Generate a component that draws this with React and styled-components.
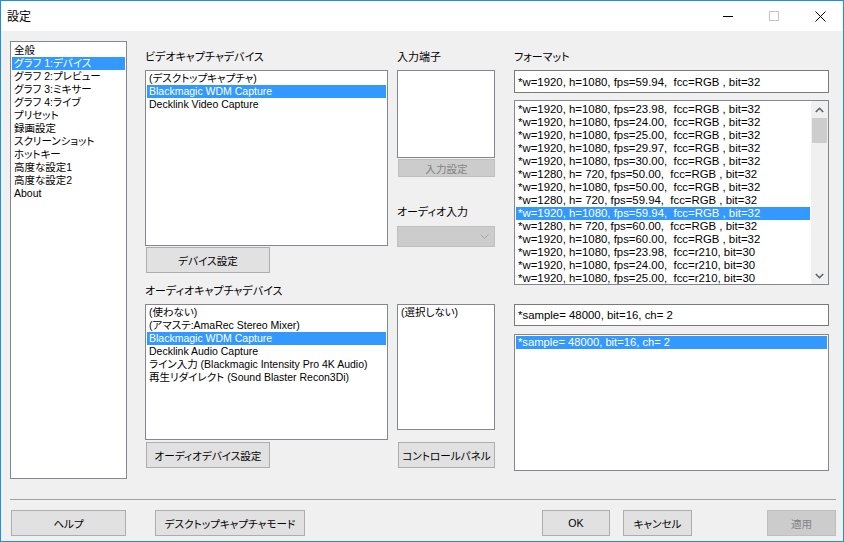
import React from 'react';
import styled, { createGlobalStyle } from 'styled-components';

const GlobalStyle = createGlobalStyle`
  html, body {
    margin: 0;
    padding: 0;
    background: #fff;
  }
  body {
    font-family: "Liberation Sans", "Noto Sans CJK JP", sans-serif;
    font-size: 10.5px;
    font-feature-settings: "palt";
    color: #000;
  }
`;

const navItems = [
  '全般',
  'グラフ 1:デバイス',
  'グラフ 2:プレビュー',
  'グラフ 3:ミキサー',
  'グラフ 4:ライブ',
  'プリセット',
  '録画設定',
  'スクリーンショット',
  'ホットキー',
  '高度な設定1',
  '高度な設定2',
  'About',
];

const videoDevices = ['(デスクトップキャプチャ)', 'Blackmagic WDM Capture', 'Decklink Video Capture'];

const audioDevices = [
  '(使わない)',
  '(アマステ:AmaRec Stereo Mixer)',
  'Blackmagic WDM Capture',
  'Decklink Audio Capture',
  'ライン入力 (Blackmagic Intensity Pro 4K Audio)',
  '再生リダイレクト (Sound Blaster Recon3Di)',
];

const formats = [
  '*w=1920, h=1080, fps=23.98,  fcc=RGB , bit=32',
  '*w=1920, h=1080, fps=24.00,  fcc=RGB , bit=32',
  '*w=1920, h=1080, fps=25.00,  fcc=RGB , bit=32',
  '*w=1920, h=1080, fps=29.97,  fcc=RGB , bit=32',
  '*w=1920, h=1080, fps=30.00,  fcc=RGB , bit=32',
  '*w=1280, h= 720, fps=50.00,  fcc=RGB , bit=32',
  '*w=1920, h=1080, fps=50.00,  fcc=RGB , bit=32',
  '*w=1280, h= 720, fps=59.94,  fcc=RGB , bit=32',
  '*w=1920, h=1080, fps=59.94,  fcc=RGB , bit=32',
  '*w=1280, h= 720, fps=60.00,  fcc=RGB , bit=32',
  '*w=1920, h=1080, fps=60.00,  fcc=RGB , bit=32',
  '*w=1920, h=1080, fps=23.98,  fcc=r210, bit=30',
  '*w=1920, h=1080, fps=24.00,  fcc=r210, bit=30',
  '*w=1920, h=1080, fps=25.00,  fcc=r210, bit=30',
];

const audioFormat = '*sample= 48000, bit=16, ch= 2';

const App = () => {
  return (
    <>
      <GlobalStyle />
      <Window>
        <TitleBar>
          <Title>設定</Title>
          <CaptionButton>
            <svg width="10" height="10" viewBox="0 0 10 10">
              <line x1="0" y1="5.5" x2="10" y2="5.5" stroke="#000" strokeWidth="1" />
            </svg>
          </CaptionButton>
          <CaptionButton>
            <svg width="10" height="10" viewBox="0 0 10 10">
              <rect x="0.5" y="0.5" width="9" height="9" fill="none" stroke="#c4c4c4" strokeWidth="1" />
            </svg>
          </CaptionButton>
          <CaptionButton>
            <svg width="11" height="11" viewBox="0 0 11 11">
              <path d="M0.5 0.5 L10.5 10.5 M10.5 0.5 L0.5 10.5" stroke="#000" strokeWidth="1" />
            </svg>
          </CaptionButton>
        </TitleBar>

        <Main>
          <ListBox $w={117} $h={438} $pad={2}>
            {navItems.map((t, i) => (
              <Row key={t} $selected={i === 1}>{t}</Row>
            ))}
          </ListBox>

          <Column $w={243} $ml={18}>
            <Label $mt={10} $mb={6}>ビデオキャプチャデバイス</Label>
            <ListBox $w={243} $h={176} $pad={1}>
              {videoDevices.map((t, i) => (
                <Row key={t} $selected={i === 1}>{t}</Row>
              ))}
            </ListBox>
            <Button $w={124} $mt={1}>デバイス設定</Button>
            <Label $mt={12} $mb={6}>オーディオキャプチャデバイス</Label>
            <ListBox $w={243} $h={136} $pad={1}>
              {audioDevices.map((t, i) => (
                <Row key={t} $selected={i === 2}>{t}</Row>
              ))}
            </ListBox>
            <Button $w={124} $mt={2}>オーディオデバイス設定</Button>
          </Column>

          <Column $w={98} $ml={9}>
            <Label $mt={10} $mb={6}>入力端子</Label>
            <ListBox $w={98} $h={88} $pad={1} />
            <Button $w={97} $h={18} $mt={1} disabled>入力設定</Button>
            <Label $mt={29} $mb={7}>オーディオ入力</Label>
            <Combo>
              <svg width="9" height="5" viewBox="0 0 9 5">
                <path d="M0.5 0.5 L4.5 4.5 L8.5 0.5" fill="none" stroke="#a6a6a6" strokeWidth="1" />
              </svg>
            </Combo>
            <ListBox $w={98} $h={126} $pad={1} $mt={57}>
              <Row>(選択しない)</Row>
            </ListBox>
            <Button $w={97} $mt={12}>コントロールパネル</Button>
          </Column>

          <Column $w={315} $ml={19}>
            <Label $mt={10} $mb={6}>フォーマット</Label>
            <TextBox $h={23}>{formats[8]}</TextBox>
            <ListBox $w={315} $h={185} $pad={0} $mt={7} $row>
              <Items $pad={2}>
                {formats.map((t, i) => (
                  <Row key={i} $selected={i === 8} $size={11.4}>{t}</Row>
                ))}
              </Items>
              <ScrollBar>
                <ScrollArrow>
                  <svg width="9" height="6" viewBox="0 0 9 6">
                    <path d="M0.8 5 L4.5 1.3 L8.2 5" fill="none" stroke="#606060" strokeWidth="1.6" />
                  </svg>
                </ScrollArrow>
                <Thumb />
                <Track />
                <ScrollArrow>
                  <svg width="9" height="6" viewBox="0 0 9 6">
                    <path d="M0.8 1 L4.5 4.7 L8.2 1" fill="none" stroke="#606060" strokeWidth="1.6" />
                  </svg>
                </ScrollArrow>
              </ScrollBar>
            </ListBox>
            <TextBox $h={22} $mt={19}>{audioFormat}</TextBox>
            <ListBox $w={315} $h={137} $pad={1} $mt={8}>
              <Row $selected $size={11.2}>{audioFormat}</Row>
            </ListBox>
          </Column>
        </Main>

        <Separator />
        <ButtonRow>
          <Button $w={115}>ヘルプ</Button>
          <Button $w={150} $ml={29}>デスクトップキャプチャモード</Button>
          <Spacer />
          <Button $w={68}>OK</Button>
          <Button $w={69} $ml={13}>キャンセル</Button>
          <Button $w={69} $ml={75} disabled>適用</Button>
        </ButtonRow>
      </Window>
    </>
  );
};

const Window = styled.div`
  width: 844px;
  height: 542px;
  box-sizing: border-box;
  border: 1px solid #1c8fe0;
  background: #f0f0f0;
  display: flex;
  flex-direction: column;
  overflow: hidden;
`;

const TitleBar = styled.div`
  height: 30px;
  background: #fff;
  display: flex;
  align-items: center;
  flex-shrink: 0;
`;

const Title = styled.div`
  flex: 1;
  padding-left: 6px;
  font-size: 12px;
  padding-bottom: 1px;
`;

const CaptionButton = styled.div`
  width: 46px;
  height: 30px;
  display: flex;
  align-items: center;
  justify-content: center;
  svg {
    display: block;
  }
`;

const Main = styled.div`
  display: flex;
  align-items: flex-start;
  padding: 10px 0 0 9px;
  height: 448px;
  box-sizing: border-box;
  flex-shrink: 0;
`;

const Column = styled.div`
  display: flex;
  flex-direction: column;
  width: ${(p) => p.$w}px;
  margin-left: ${(p) => p.$ml || 0}px;
`;

const Label = styled.div`
  height: 13px;
  line-height: 13px;
  font-size: 11px;
  margin-top: ${(p) => p.$mt}px;
  margin-bottom: ${(p) => p.$mb}px;
  white-space: nowrap;
`;

const ListBox = styled.div`
  width: ${(p) => p.$w}px;
  height: ${(p) => p.$h}px;
  margin-top: ${(p) => p.$mt || 0}px;
  box-sizing: border-box;
  border: 1px solid #828790;
  background: #fff;
  padding-top: ${(p) => p.$pad}px;
  overflow: hidden;
  flex-shrink: 0;
  display: flex;
  flex-direction: ${(p) => (p.$row ? 'row' : 'column')};
`;

const Items = styled.div`
  flex: 1;
  padding-top: ${(p) => p.$pad}px;
  overflow: hidden;
`;

const Row = styled.div`
  height: 13px;
  line-height: 13px;
  font-size: ${(p) => p.$size || 10.5}px;
  margin: 0 1px;
  padding: 0 2px;
  white-space: pre;
  overflow: hidden;
  background: ${(p) => (p.$selected ? '#3399ff' : 'transparent')};
  color: ${(p) => (p.$selected ? '#fff' : '#000')};
`;

const ScrollBar = styled.div`
  width: 17px;
  background: #f0f0f0;
  display: flex;
  flex-direction: column;
`;

const ScrollArrow = styled.div`
  height: 17px;
  display: flex;
  align-items: center;
  justify-content: center;
`;

const Thumb = styled.div`
  height: 25px;
  margin: 0 1px;
  background: #cdcdcd;
`;

const Track = styled.div`
  flex: 1;
`;

const TextBox = styled.div`
  height: ${(p) => p.$h}px;
  margin-top: ${(p) => p.$mt || 0}px;
  box-sizing: border-box;
  border: 1px solid #7a7a7a;
  background: #fff;
  padding: 0 3px;
  display: flex;
  align-items: center;
  font-size: 11.4px;
  white-space: pre;
  flex-shrink: 0;
`;

const Button = styled.div`
  width: ${(p) => p.$w}px;
  height: ${(p) => p.$h || 26}px;
  margin-top: ${(p) => p.$mt || 0}px;
  margin-left: ${(p) => p.$ml || 0}px;
  box-sizing: border-box;
  border: 1px solid ${(p) => (p.disabled ? '#bfbfbf' : '#adadad')};
  background: ${(p) => (p.disabled ? '#cccccc' : '#e1e1e1')};
  color: ${(p) => (p.disabled ? '#838383' : '#000')};
  display: flex;
  align-items: center;
  justify-content: center;
  white-space: nowrap;
  font-size: 10.6px;
  flex-shrink: 0;
  ${Column} > & {
    margin-left: 1px;
  }
`;

const Combo = styled.div`
  height: 21px;
  box-sizing: border-box;
  border: 1px solid #bfbfbf;
  background: #cccccc;
  display: flex;
  align-items: center;
  justify-content: flex-end;
  padding-right: 5px;
  svg {
    display: block;
  }
`;

const Separator = styled.div`
  height: 0;
  border-top: 1px solid #a0a0a0;
  margin: 20px 7px 0 9px;
`;

const ButtonRow = styled.div`
  display: flex;
  margin-top: 10px;
  padding: 0 7px 0 10px;
`;

const Spacer = styled.div`
  flex: 1;
`;

export default App;
